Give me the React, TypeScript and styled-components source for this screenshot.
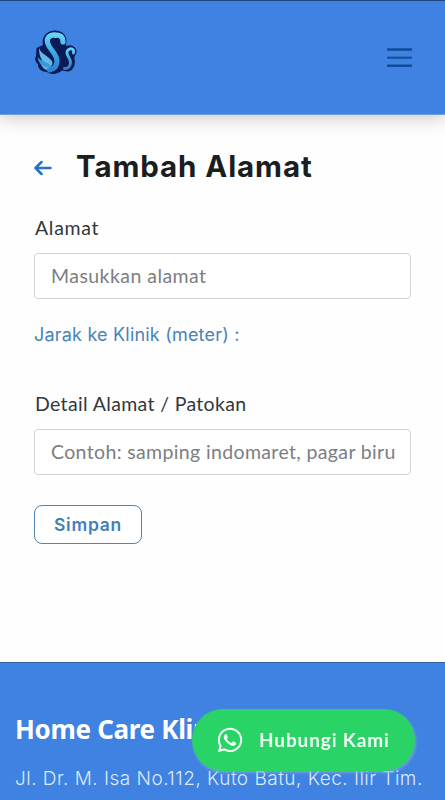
import React from "react";
import styled, { createGlobalStyle } from "styled-components";
import { FaWhatsapp } from "react-icons/fa";

const GlobalStyle = createGlobalStyle`
  *, *::before, *::after { box-sizing: border-box; }
  html, body { margin: 0; padding: 0; }
  body { background: #fefefe; overflow: hidden; font-family: Lato, "Noto Sans", sans-serif; }
`;

const Page = styled.div`
  display: flex;
  flex-direction: column;
  width: 100%;
  height: 800px;
  overflow: hidden;
`;

const Header = styled.header`
  display: flex;
  flex: none;
  align-items: flex-start;
  justify-content: space-between;
  height: 115px;
  padding: 29px 33px 0 34px;
  border-top: 1px solid #1f4583;
  border-bottom: 1px solid #6f9fe2;
  background: #3f82e2;
  box-shadow: 0 2px 18px rgba(0, 0, 0, 0.24);
`;

const MenuButton = styled.button`
  display: flex;
  margin: 17px 0 0;
  padding: 0;
  border: 0;
  background: none;
  color: #124a9c;
`;

const Main = styled.main`
  display: flex;
  flex: none;
  flex-direction: column;
  align-items: flex-start;
  height: 547px;
  padding: 33px 35px 0 34px;
`;

const TitleRow = styled.div`
  display: flex;
  align-items: center;
  gap: 24px;
  height: 36px;
`;

const BackLink = styled.a`
  display: flex;
  margin-top: 4px;
  color: #2470cb;
`;

const Title = styled.h1`
  margin: 0;
  color: #1b1d20;
  font: 700 29.5px/36px Inter, sans-serif;
  letter-spacing: 0.9px;
  white-space: nowrap;
`;

const Label = styled.label<{ $top: number; $track: number }>`
  margin-top: ${(p) => p.$top}px;
  padding-left: 1px;
  color: #34373b;
  font-size: 19.5px;
  line-height: 28px;
  letter-spacing: ${(p) => p.$track}px;
`;

const Field = styled.input<{ $track: number }>`
  width: 377px;
  height: 46px;
  margin-top: 11px;
  padding: 0 8px 1px 16px;
  border: 1px solid #d2d3d5;
  border-radius: 4px;
  background: #fff;
  font: 400 19.5px Lato, "Noto Sans", sans-serif;
  letter-spacing: ${(p) => p.$track}px;
  outline: none;
  &::placeholder { color: #7b7e82; opacity: 1; }
`;

const Distance = styled.p`
  margin: 22px 0 0;
  color: #4883b8;
  font: 400 18px/28px Inter, sans-serif;
  letter-spacing: 0.2px;
  white-space: nowrap;
`;

const SaveButton = styled.button`
  width: 108px;
  height: 39px;
  margin-top: 30px;
  padding: 0;
  border: 1px solid #4f86ae;
  border-radius: 8px;
  background: #fff;
  color: #3f7fba;
  font: 600 17.5px Inter, sans-serif;
  letter-spacing: 0.75px;
`;

const Footer = styled.footer`
  flex: none;
  height: 138px;
  padding: 49px 15px 0;
  border-top: 1px solid #34649f;
  background: #3f82e2;
  color: #fff;
`;

const ClinicName = styled.h2`
  margin: 0;
  font: 700 26px/34px "Noto Sans", sans-serif;
  letter-spacing: -0.32px;
  white-space: nowrap;
`;

const Address = styled.p`
  margin: 19px 0 0;
  color: #dceafa;
  font: 300 19px/28px Inter, sans-serif;
  letter-spacing: 0.48px;
  white-space: nowrap;
`;

const ContactButton = styled.a`
  position: fixed;
  right: 30px;
  bottom: 29px;
  display: flex;
  align-items: center;
  gap: 15px;
  width: 223px;
  height: 62px;
  padding-left: 24px;
  border-radius: 31px;
  background: #29d366;
  box-shadow: 1px 2px 3px rgba(125, 170, 210, 0.8);
  color: #effff3;
  font: 700 19px/26px Lato, sans-serif;
  letter-spacing: 0.87px;
  white-space: nowrap;
`;

const SwanLogo = () => (
  <svg width="44" height="46" viewBox="0 0 44 46" fill="none" strokeLinecap="round" strokeLinejoin="round">
    <defs>
      <linearGradient id="swan" x1="0" y1="0" x2="0" y2="1">
        <stop offset="0" stopColor="#66d2f8" />
        <stop offset="0.5" stopColor="#3ca8e4" />
        <stop offset="1" stopColor="#2f82cf" />
      </linearGradient>
    </defs>
    <path d="M20 .5C27 0 32 4 32.500 10L32 16C37 13.500 43 17 42.500 22C42 25 40 26 40.500 29C42 35 39 41.500 33 41.500L28 40.500C24 44 17 45.500 13 42C7 42 3.500 38 4 34C1 32 .5 28 2 26L2.500 18L9 15C7 8 12 1 20 .5Z" fill="#0c1b56" />
    <path d="M5 18C7 24 13 25 18 31C19 34 18 36 16 36C9 34 5 28 5 18Z" fill="#62b9e5" />
    <path d="M3.500 27C7 32 13 31 17 36L17 39C10 39 5 35 3.500 27Z" fill="#3a98da" />
    <path d="M7 35C11 37 14 36 18 39C14 42 10 40 7 35Z" fill="#5db2e2" />
    <path d="M21 7C24 5.500 28 7 28.500 11.500" stroke="#66d2f8" strokeWidth="2" />
    <path d="M29 12C29 6 25.500 4.800 20.500 4.800C14.500 4.800 12 9 14 14C16 20 23 24 23 31C23 36 20 39 15.500 40" stroke="url(#swan)" strokeWidth="5.200" />
    <path d="M39.500 23C40.500 19 37 17.500 34 20C30 24 37 27 36.500 33C36.200 36.500 34 38.500 30.500 38.500" stroke="url(#swan)" strokeWidth="2.900" />
  </svg>
);

const MenuIcon = () => (
  <svg width="25" height="21" viewBox="0 0 25 21" stroke="currentColor">
    <path d="M0 2.500H25M0 18.800H25" strokeWidth="2.600" />
    <path d="M0 10.700H25" strokeWidth="2" />
  </svg>
);

const BackIcon = () => (
  <svg width="18" height="16" viewBox="0 0 18 16" fill="none" stroke="currentColor" strokeWidth="2.500" strokeLinecap="round" strokeLinejoin="round">
    <path d="M7.500 2L1.500 8L7.500 14M1.500 8H16.500" />
  </svg>
);

export default function App() {
  return (
    <Page>
      <GlobalStyle />
      <Header>
        <SwanLogo />
        <MenuButton aria-label="Menu"><MenuIcon /></MenuButton>
      </Header>
      <Main>
        <TitleRow>
          <BackLink aria-label="Kembali"><BackIcon /></BackLink>
          <Title>Tambah Alamat</Title>
        </TitleRow>
        <Label htmlFor="alamat" $top={30} $track={0.7}>Alamat</Label>
        <Field id="alamat" placeholder="Masukkan alamat" $track={0.45} />
        <Distance>Jarak ke Klinik (meter) :</Distance>
        <Label htmlFor="detail" $top={41} $track={0.35}>Detail Alamat / Patokan</Label>
        <Field id="detail" placeholder="Contoh: samping indomaret, pagar biru" $track={0.36} />
        <SaveButton>Simpan</SaveButton>
      </Main>
      <Footer>
        <ClinicName>Home Care Klinik</ClinicName>
        <Address>Jl. Dr. M. Isa No.112, Kuto Batu, Kec. Ilir Tim.</Address>
      </Footer>
      <ContactButton>
        <FaWhatsapp size={28} />
        <span>Hubungi Kami</span>
      </ContactButton>
    </Page>
  );
}
